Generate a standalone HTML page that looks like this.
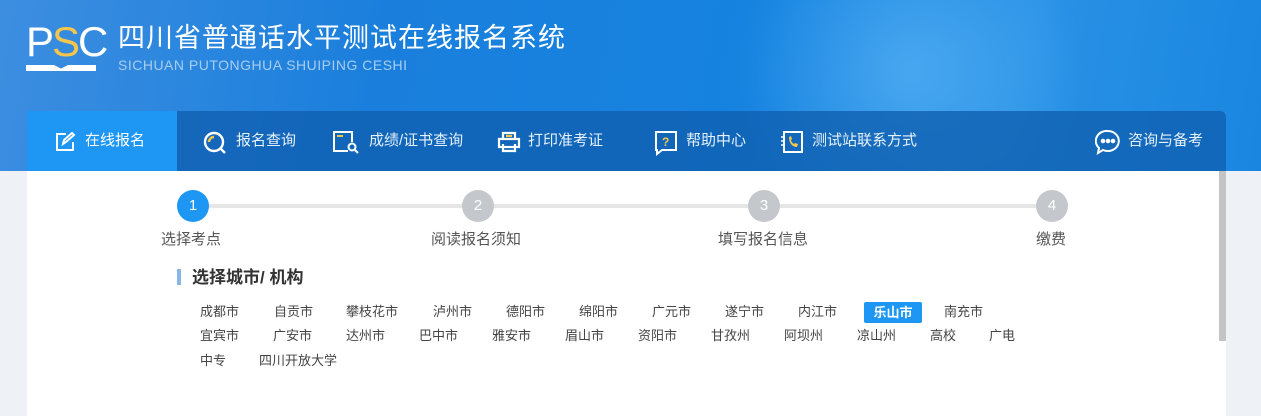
<!DOCTYPE html>
<html><head><meta charset="utf-8"><style>
*{margin:0;padding:0;box-sizing:border-box}
body{width:1261px;height:416px;overflow:hidden;background:#eef1f5;font-family:"Liberation Sans","Noto Sans CJK SC",sans-serif;position:relative}
.hdr{position:absolute;left:0;top:0;width:1261px;height:171px;background:linear-gradient(100deg,#3d8ee0 0%,#1a7fdc 30%,#1683e0 60%,#2a92e6 80%,#1a86e0 100%)}
.glow{position:absolute;left:700px;top:-60px;width:420px;height:260px;border-radius:50%;background:radial-gradient(circle,rgba(120,200,255,.45),rgba(120,200,255,0) 70%)}
.nav{position:absolute;left:27px;top:111px;width:1199px;height:60px;background:rgba(15,95,175,.78);border-radius:6px 6px 0 0}
.act{position:absolute;left:27px;top:111px;width:150px;height:60px;background:#1e96f3}
.ni{position:absolute;top:131px;color:#e6f1fb;font-size:15px;line-height:20px}
.main{position:absolute;left:27px;top:171px;width:1199px;height:245px;background:#fff}
.sb{position:absolute;left:1219px;top:171px;width:7px;height:170px;background:#c4c4c4}
.c{position:absolute;top:190px;width:32px;height:32px;border-radius:50%;background:#c4c8cc;color:#fff;font-size:15px;text-align:center;line-height:32px}
.l{position:absolute;top:230px;font-size:15px;color:#555;line-height:20px}
.ct{position:absolute;font-size:13px;color:#444;line-height:18px}
</style></head><body>
<div class="hdr"><div class="glow"></div></div>
<div style="position:absolute;left:26px;top:20px;color:#fff;font-size:42px;letter-spacing:-2px;line-height:44px;font-family:'Liberation Sans',sans-serif">P<span style="color:#f6c64a">S</span>C</div>
<div style="position:absolute;left:26px;top:65px;width:70px;height:6px;background:#fff;clip-path:polygon(0 0,40% 0,50% 60%,60% 0,100% 0,100% 100%,0 100%)"></div>
<div style="position:absolute;left:118px;top:21px;color:#fff;font-size:27px;line-height:34px;letter-spacing:1px">四川省普通话水平测试在线报名系统</div>
<div style="position:absolute;left:118px;top:57px;color:#a8cdf0;font-size:14px;letter-spacing:.5px">SICHUAN PUTONGHUA SHUIPING CESHI</div>
<div class="nav"></div><div class="act"></div>
<svg style="position:absolute;left:54px;top:131px" width="22" height="22" fill="none" stroke="#fff" stroke-width="2"><path d="M12 3H3v16h16v-8"/><path d="M9 13l1-4 8-7 2 2-8 7z"/></svg>
<div class="ni" style="left:85px;color:#fff">在线报名</div>
<svg style="position:absolute;left:202px;top:130px" width="26" height="26" fill="none" stroke-width="2.4"><circle cx="12" cy="12" r="9" stroke="#fff"/><path d="M7 12a5 5 0 0 1 5-5" stroke="#f6c64a"/><path d="M19 19l4 4" stroke="#fff"/></svg>
<div class="ni" style="left:236px">报名查询</div>
<svg style="position:absolute;left:332px;top:130px" width="28" height="24" fill="none" stroke="#fff" stroke-width="2"><path d="M16 21H2V2h18v10"/><path d="M5 6h6" stroke="#f6c64a"/><circle cx="20" cy="17" r="3.5"/><path d="M23 20l3 3"/></svg>
<div class="ni" style="left:369px">成绩/证书查询</div>
<svg style="position:absolute;left:497px;top:131px" width="24" height="22" fill="none" stroke="#fff" stroke-width="2.2"><path d="M6 8V2h12v6"/><rect x="2" y="8" width="20" height="8"/><path d="M6 13v7h12v-7"/><path d="M9 5h6" stroke="#f6c64a"/></svg>
<div class="ni" style="left:528px">打印准考证</div>
<svg style="position:absolute;left:654px;top:130px" width="24" height="26" fill="none" stroke="#fff" stroke-width="2"><path d="M2 2h20v18H8l-5 4v-4H2z"/><text x="8" y="16" font-size="12" fill="#f6c64a" stroke="none" font-weight="bold">?</text></svg>
<div class="ni" style="left:686px">帮助中心</div>
<svg style="position:absolute;left:780px;top:131px" width="24" height="24" fill="none" stroke="#fff" stroke-width="2"><rect x="4" y="1" width="18" height="20"/><path d="M1 6h4M1 10h4M1 14h4" stroke-width="1.5"/><path d="M9 6c0 6 3 10 8 10l1-3-3-1-1 1c-2-1-3-3-3-4l1-1-1-3z" fill="#f6c64a" stroke="none"/></svg>
<div class="ni" style="left:812px">测试站联系方式</div>
<svg style="position:absolute;left:1095px;top:129px" width="26" height="26" fill="none" stroke="#fff" stroke-width="2"><path d="M13 2a11 10 0 1 1-5 19l-5 3 1-5A11 10 0 0 1 13 2z"/><circle cx="8" cy="12" r="1.3" fill="#fff"/><circle cx="13" cy="12" r="1.3" fill="#fff"/><circle cx="18" cy="12" r="1.3" fill="#fff"/></svg>
<div class="ni" style="left:1128px">咨询与备考</div>
<div class="main"></div><div class="sb"></div>
<div style="position:absolute;left:193px;top:204px;width:860px;height:4px;background:#e6e6e6"></div>
<div class="c" style="left:177px;background:#1e96f3">1</div>
<div class="c" style="left:462px">2</div>
<div class="c" style="left:748px">3</div>
<div class="c" style="left:1036px">4</div>
<div class="l" style="left:161px">选择考点</div>
<div class="l" style="left:431px">阅读报名须知</div>
<div class="l" style="left:718px">填写报名信息</div>
<div class="l" style="left:1036px">缴费</div>
<div style="position:absolute;left:177px;top:269px;width:4px;height:16px;background:#8ab6e6"></div>
<div style="position:absolute;left:192px;top:267px;font-size:17px;font-weight:bold;color:#333;line-height:22px">选择城市/ 机构</div>
<div class="ct" style="left:200px;top:303px">成都市</div><div class="ct" style="left:274px;top:303px">自贡市</div><div class="ct" style="left:346px;top:303px">攀枝花市</div><div class="ct" style="left:433px;top:303px">泸州市</div><div class="ct" style="left:506px;top:303px">德阳市</div><div class="ct" style="left:579px;top:303px">绵阳市</div><div class="ct" style="left:652px;top:303px">广元市</div><div class="ct" style="left:725px;top:303px">遂宁市</div><div class="ct" style="left:798px;top:303px">内江市</div>
<div class="ct" style="left:864px;top:302px;width:58px;height:21px;line-height:21px;background:#1e96f3;color:#fff;font-weight:bold;text-align:center;border-radius:2px">乐山市</div>
<div class="ct" style="left:944px;top:303px">南充市</div>
<div class="ct" style="left:200px;top:327px">宜宾市</div><div class="ct" style="left:273px;top:327px">广安市</div><div class="ct" style="left:346px;top:327px">达州市</div><div class="ct" style="left:419px;top:327px">巴中市</div><div class="ct" style="left:492px;top:327px">雅安市</div><div class="ct" style="left:565px;top:327px">眉山市</div><div class="ct" style="left:638px;top:327px">资阳市</div><div class="ct" style="left:711px;top:327px">甘孜州</div><div class="ct" style="left:784px;top:327px">阿坝州</div><div class="ct" style="left:857px;top:327px">凉山州</div><div class="ct" style="left:930px;top:327px">高校</div><div class="ct" style="left:989px;top:327px">广电</div>
<div class="ct" style="left:200px;top:352px">中专</div><div class="ct" style="left:259px;top:352px">四川开放大学</div>
</body></html>
